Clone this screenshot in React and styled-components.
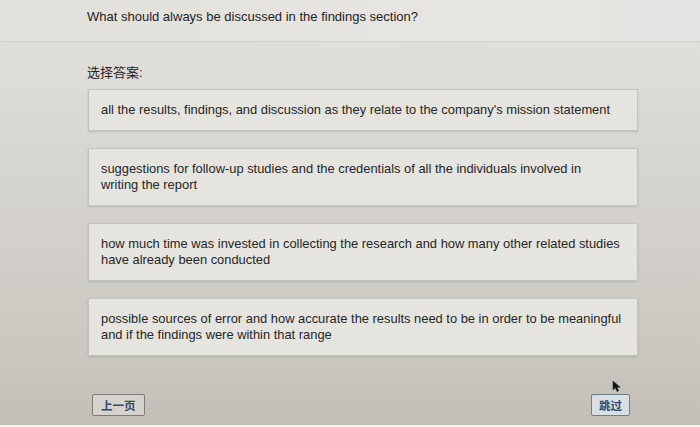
import React from "react";
import styled, { createGlobalStyle } from "styled-components";

const GlobalStyle = createGlobalStyle`
  html, body {
    margin: 0;
    padding: 0;
    background: #f4f4f2;
  }
  body {
    font-family: "Liberation Sans", Arial, "Noto Sans CJK SC", sans-serif;
    color: #222;
  }
`;

const Page = styled.div`
  position: relative;
  width: 700px;
  height: 425px;
  overflow: hidden;
  display: flex;
  flex-direction: column;
  background: linear-gradient(180deg, #e3e2dd 0%, #d8d6d1 35%, #cdcac4 75%, #c3bfb8 100%);
`;

const Header = styled.div`
  height: 42px;
  padding: 9px 0 0 87px;
  box-sizing: border-box;
  background: linear-gradient(90deg, #e2e0da 0%, #e6e5e1 60%, #e4e4e2 100%);
  border-bottom: 1px solid #d0cfcb;
  font-size: 13px;
  color: #1e1e1e;
`;

const Body = styled.div`
  flex: 1;
  display: flex;
  flex-direction: column;
  padding: 23px 62px 0 87px;
`;

const Label = styled.div`
  font-size: 13px;
  line-height: 16px;
  color: #1e1e1e;
  margin-bottom: 8px;
`;

const Options = styled.div`
  display: flex;
  flex-direction: column;
  gap: 17px;
  padding-left: 1px;
`;

const Option = styled.div`
  width: 550px;
  box-sizing: border-box;
  padding: 12px;
  font-size: 12.9px;
  line-height: 16px;
  white-space: pre-line;
  color: #262626;
  background: #e5e4df;
  border: 1px solid #c4c2bd;
  box-shadow: 0 1px 2px rgba(0, 0, 0, 0.12);
`;

const Footer = styled.div`
  display: flex;
  justify-content: space-between;
  padding: 38px 8px 0 5px;
`;

const NavButton = styled.button`
  height: 22px;
  padding: 0 ${(p) => (p.$wide ? 8 : 7)}px;
  font-family: "Noto Sans CJK SC", sans-serif;
  font-size: 11.5px;
  font-weight: 700;
  color: #2c4a72;
  background: ${(p) => (p.$tint ? "#d9dfe2" : "#d6d3cd")};
  border: 1.5px solid ${(p) => (p.$tint ? "#6f808a" : "#7c7b7a")};
  border-radius: 2px;
  line-height: 18px;
`;

const Cursor = styled.svg`
  position: absolute;
  left: 612px;
  top: 380px;
`;

const options = [
  "all the results, findings, and discussion as they relate to the company's mission statement",
  "suggestions for follow-up studies and the credentials of all the individuals involved in\nwriting the report",
  "how much time was invested in collecting the research and how many other related studies\nhave already been conducted",
  "possible sources of error and how accurate the results need to be in order to be meaningful\nand if the findings were within that range",
];

export default function App() {
  return (
    <>
      <GlobalStyle />
      <Page>
        <Header>What should always be discussed in the findings section?</Header>
        <Body>
          <Label>选择答案:</Label>
          <Options>
            {options.map((o) => (
              <Option key={o}>{o}</Option>
            ))}
          </Options>
          <Footer>
            <NavButton $wide>上一页</NavButton>
            <NavButton $tint>跳过</NavButton>
          </Footer>
        </Body>
        <Cursor width="10" height="13" viewBox="0 0 10 13">
          <path d="M1 1 L1 10 L3.3 7.8 L5 11.5 L6.6 10.8 L5 7.2 L8.2 7.2 Z" fill="#111" stroke="#333" strokeWidth="0.6" />
        </Cursor>
      </Page>
    </>
  );
}
